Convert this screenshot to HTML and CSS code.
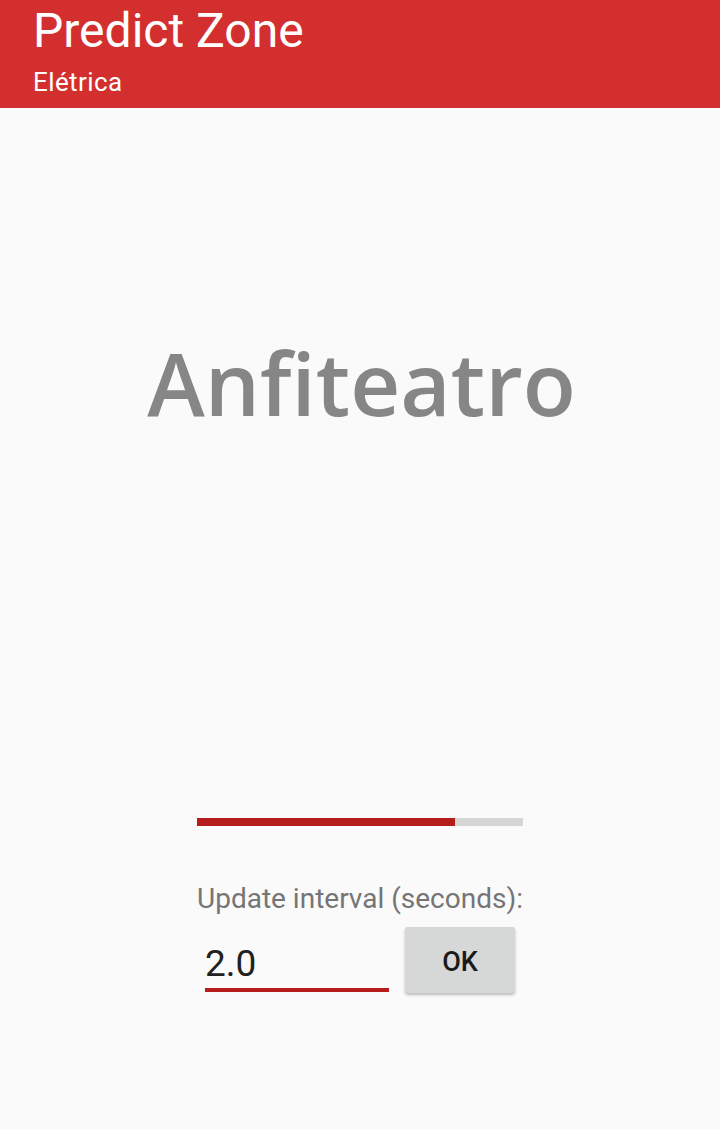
FILE: index.html
```html
<!DOCTYPE html>
<html>
<head>
<meta charset="utf-8">
<link rel="stylesheet" href="styles.css">
</head>
<body>
<header class="appbar">
  <div class="title">Predict Zone</div>
  <div class="subtitle">Elétrica</div>
</header>
<main class="content">
  <div class="zone">Anfiteatro</div>
  <div class="panel">
    <div class="progress"><div class="progress-fill" style="width: 79.1%"></div></div>
    <div class="label">Update interval (seconds):</div>
    <div class="row">
      <div class="edit"><span class="edit-text">2.0</span></div>
      <button class="btn">OK</button>
    </div>
  </div>
</main>
</body>
</html>
```
FILE: styles.css
```css
html, body {
  margin: 0;
  padding: 0;
}
body {
  width: 720px;
  height: 1129px;
  background: #fafafa;
  font-family: Roboto, "Liberation Sans", sans-serif;
  overflow: hidden;
}
.appbar {
  background: #d32f2f;
  height: 108px;
  box-sizing: border-box;
  padding: 0 0 0 33px;
  color: #fff;
  display: flex;
  flex-direction: column;
}
.title {
  font-size: 48px;
  line-height: 60px;
  margin-top: 1px;
}
.subtitle {
  font-size: 26px;
  line-height: 32px;
  margin-top: 5px;
  letter-spacing: 0.4px;
}
.content {
  display: flex;
  flex-direction: column;
  align-items: center;
}
.zone {
  font-family: "Open Sans", sans-serif;
  font-weight: 600;
  font-size: 87px;
  line-height: 100px;
  color: #868686;
  margin-top: 224px;
  margin-left: 3px;
}
.panel {
  width: 326px;
  margin-top: 386px;
  display: flex;
  flex-direction: column;
}
.progress {
  height: 8px;
  background: #d6d6d6;
}
.progress-fill {
  height: 100%;
  background: #b71c1c;
}
.label {
  margin-top: 55px;
  font-size: 28px;
  line-height: 36px;
  color: #757575;
  white-space: nowrap;
}
.row {
  display: flex;
  align-items: flex-start;
  margin-top: 8px;
}
.edit {
  margin-left: 8px;
  width: 184px;
  height: 63px;
  border-bottom: 4px solid #b71c1c;
  box-sizing: content-box;
  display: flex;
  align-items: flex-end;
}
.edit-text {
  font-size: 37px;
  line-height: 44px;
  color: #212121;
  margin-bottom: 2px;
}
.btn {
  margin-left: 16px;
  margin-top: 2px;
  width: 110px;
  height: 66px;
  border: none;
  border-radius: 3px;
  background: #d6d7d7;
  box-shadow: 0 2px 3px rgba(0,0,0,0.25);
  font-family: Roboto, sans-serif;
  font-weight: 500;
  font-size: 27px;
  color: #1a1a1a;
  padding: 4px 0 0 0;
}
```
